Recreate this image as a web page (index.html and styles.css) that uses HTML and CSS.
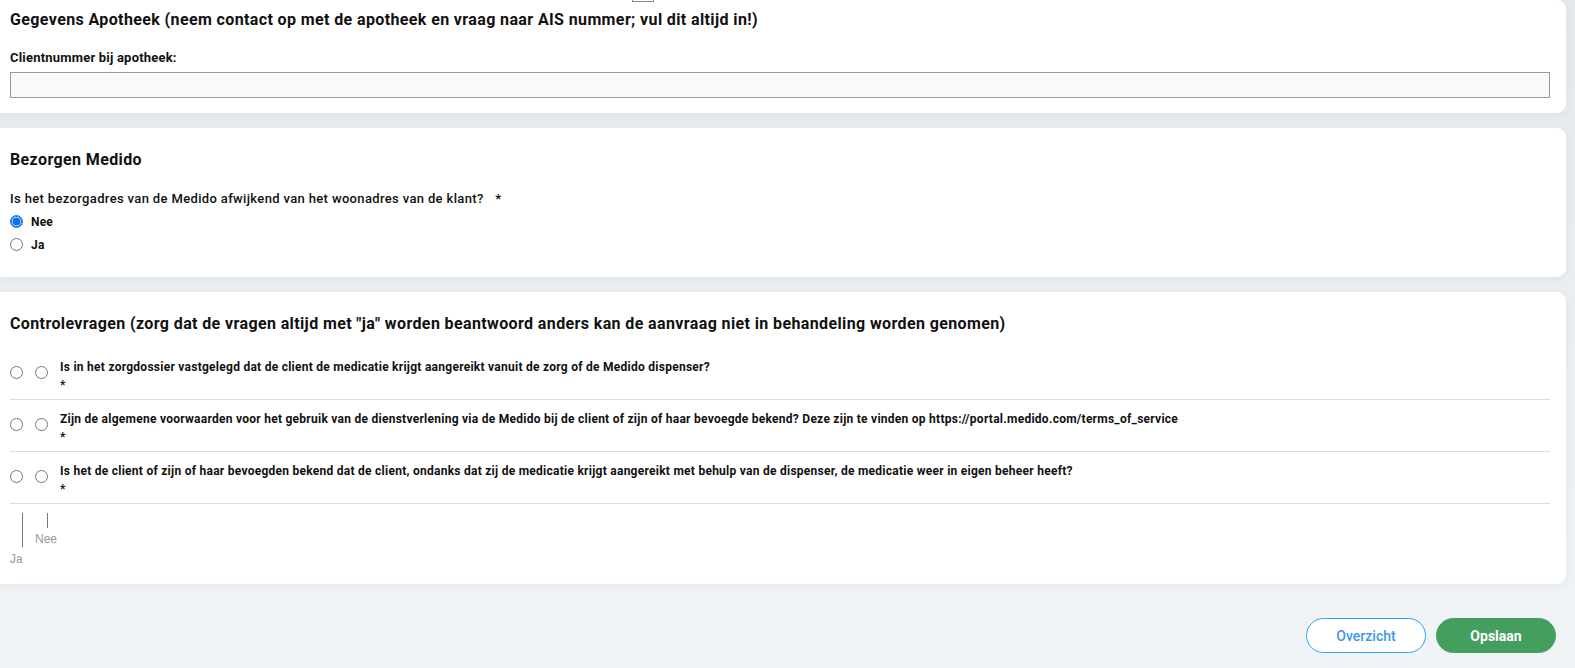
FILE: index.html
```html
<!DOCTYPE html>
<html lang="nl">
<head>
<meta charset="utf-8">
<title>Aanvraag</title>
<link rel="stylesheet" href="styles.css">
</head>
<body>
<div class="page">
  <div class="top-box"></div>
  <section class="card card-1">
    <h2 class="card-title">Gegevens Apotheek (neem contact op met de apotheek en vraag naar AIS nummer; vul dit altijd in!)</h2>
    <label class="field-label" for="clientnr">Clientnummer bij apotheek:</label>
    <input class="text-input" id="clientnr" type="text">
  </section>

  <section class="card card-2">
    <h2 class="card-title">Bezorgen Medido</h2>
    <div class="question">Is het bezorgadres van de Medido afwijkend van het woonadres van de klant? <span class="req">*</span></div>
    <label class="radio-row"><span class="radio checked"></span><span class="radio-text">Nee</span></label>
    <label class="radio-row"><span class="radio"></span><span class="radio-text">Ja</span></label>
  </section>

  <section class="card card-3">
    <h2 class="card-title">Controlevragen (zorg dat de vragen altijd met "ja" worden beantwoord anders kan de aanvraag niet in behandeling worden genomen)</h2>
    <div class="check-row">
      <div class="radios"><span class="radio"></span><span class="radio"></span></div>
      <div class="check-text">
        <div>Is in het zorgdossier vastgelegd dat de client de medicatie krijgt aangereikt vanuit de zorg of de Medido dispenser?</div>
        <div class="star">*</div>
      </div>
    </div>
    <div class="check-row">
      <div class="radios"><span class="radio"></span><span class="radio"></span></div>
      <div class="check-text">
        <div>Zijn de algemene voorwaarden voor het gebruik van de dienstverlening via de Medido bij de client of zijn of haar bevoegde bekend? Deze zijn te vinden op https://portal.medido.com/terms_of_service</div>
        <div class="star">*</div>
      </div>
    </div>
    <div class="check-row">
      <div class="radios"><span class="radio"></span><span class="radio"></span></div>
      <div class="check-text">
        <div>Is het de client of zijn of haar bevoegden bekend dat de client, ondanks dat zij de medicatie krijgt aangereikt met behulp van de dispenser, de medicatie weer in eigen beheer heeft?</div>
        <div class="star">*</div>
      </div>
    </div>
    <div class="legend">
      <div class="legend-col legend-ja">
        <span class="legend-line"></span>
        <span class="legend-text">Ja</span>
      </div>
      <div class="legend-col legend-nee">
        <span class="legend-line"></span>
        <span class="legend-text">Nee</span>
      </div>
    </div>
  </section>

  <div class="actions">
    <button class="btn btn-outline" type="button">Overzicht</button>
    <button class="btn btn-primary" type="button">Opslaan</button>
  </div>
</div>
</body>
</html>
```

FILE: styles.css
```css
* { box-sizing: border-box; }

html, body {
  margin: 0;
  padding: 0;
}

body {
  background: linear-gradient(180deg, #e6e9ec 0%, #edf0f3 60%, #f1f4f7 100%);
  font-family: Roboto, "Liberation Sans", sans-serif;
  color: #111;
  height: 668px;
  overflow: hidden;
}

.page {
  position: relative;
  padding-right: 9px;
}

.top-box {
  position: absolute;
  left: 632px;
  top: -20px;
  width: 22px;
  height: 22px;
  border: 1px solid #8a8a80;
  background: #fff;
  z-index: 2;
}

.card {
  background: #fff;
  border-radius: 0 9px 9px 0;
  box-shadow: 0 2px 10px rgba(40, 60, 80, 0.06);
}

.card-title {
  margin: 0;
  font-size: 16px;
  line-height: 20px;
  font-weight: 700;
  letter-spacing: 0.38px;
  color: #111;
}

.card-1 {
  padding: 10px 16px 15px 10px;
}

.field-label {
  display: block;
  margin-top: 20px;
  font-size: 13px;
  line-height: 16px;
  font-weight: 700;
  letter-spacing: 0.2px;
}

.text-input {
  display: block;
  width: 100%;
  height: 26px;
  margin-top: 6px;
  border: 1px solid #9a9a9a;
  background: #f9f9f9;
  border-radius: 0;
  padding: 0 6px;
}

.card-2 {
  margin-top: 15px;
  padding: 22px 16px 21px 10px;
}

.question {
  margin-top: 20px;
  font-size: 13px;
  line-height: 18px;
  font-weight: 500;
  letter-spacing: 0.35px;
  margin-bottom: 2px;
}

.req {
  margin-left: 8px;
  font-weight: 700;
}

.radio-row {
  display: flex;
  align-items: center;
  height: 23px;
  gap: 8px;
}

.radio {
  display: inline-block;
  width: 13px;
  height: 13px;
  border-radius: 50%;
  border: 1px solid #767676;
  background: #fff;
  flex: none;
}

.radio.checked {
  border: 1px solid #0b6fe6;
  background: radial-gradient(circle, #0b6fe6 0 3.6px, #fff 4.3px);
  box-shadow: inset 0 0 0 1px #0b6fe6;
}

.radio-text {
  font-size: 12px;
  font-weight: 700;
  letter-spacing: 0.2px;
}

.card-3 {
  margin-top: 15px;
  padding: 22px 16px 17px 10px;
}

.check-row {
  display: flex;
  gap: 12px;
  padding: 10px 0 5px;
  border-bottom: 1px solid #dcdcdc;
}

.card-3 .card-title + .check-row {
  margin-top: 14px;
}

.radios {
  display: flex;
  gap: 12px;
  padding-top: 8px;
}

.check-text {
  font-size: 12px;
  line-height: 18px;
  font-weight: 700;
  letter-spacing: 0.26px;
}

.star {
  font-weight: 700;
}

.legend {
  display: flex;
  padding-top: 9px;
}

.legend-col {
  display: flex;
  flex-direction: column;
  align-items: flex-start;
  width: 25px;
}

.legend-line {
  display: block;
  width: 1px;
  background: #777;
  margin-left: 12px;
}

.legend-ja .legend-line { height: 34px; }
.legend-nee .legend-line { height: 15px; }

.legend-text {
  font-family: "Liberation Sans", Arial, sans-serif;
  font-size: 12px;
  line-height: 16px;
  color: #9d9895;
}

.legend-ja .legend-text { margin-top: 4px; }
.legend-nee .legend-text { margin-top: 3px; }

.actions {
  display: flex;
  justify-content: flex-end;
  gap: 10px;
  margin-top: 34px;
  padding-right: 10px;
}

.btn {
  height: 35px;
  border-radius: 18px;
  font-family: Roboto, "Liberation Sans", sans-serif;
  font-size: 14px;
  cursor: pointer;
}

.btn-outline {
  width: 120px;
  background: #fff;
  border: 1px solid #2aa4f4;
  color: #3d97ee;
  font-weight: 500;
}

.btn-primary {
  width: 120px;
  background: #449f5f;
  border: 1px solid #449f5f;
  color: #fff;
  font-weight: 700;
}
```
